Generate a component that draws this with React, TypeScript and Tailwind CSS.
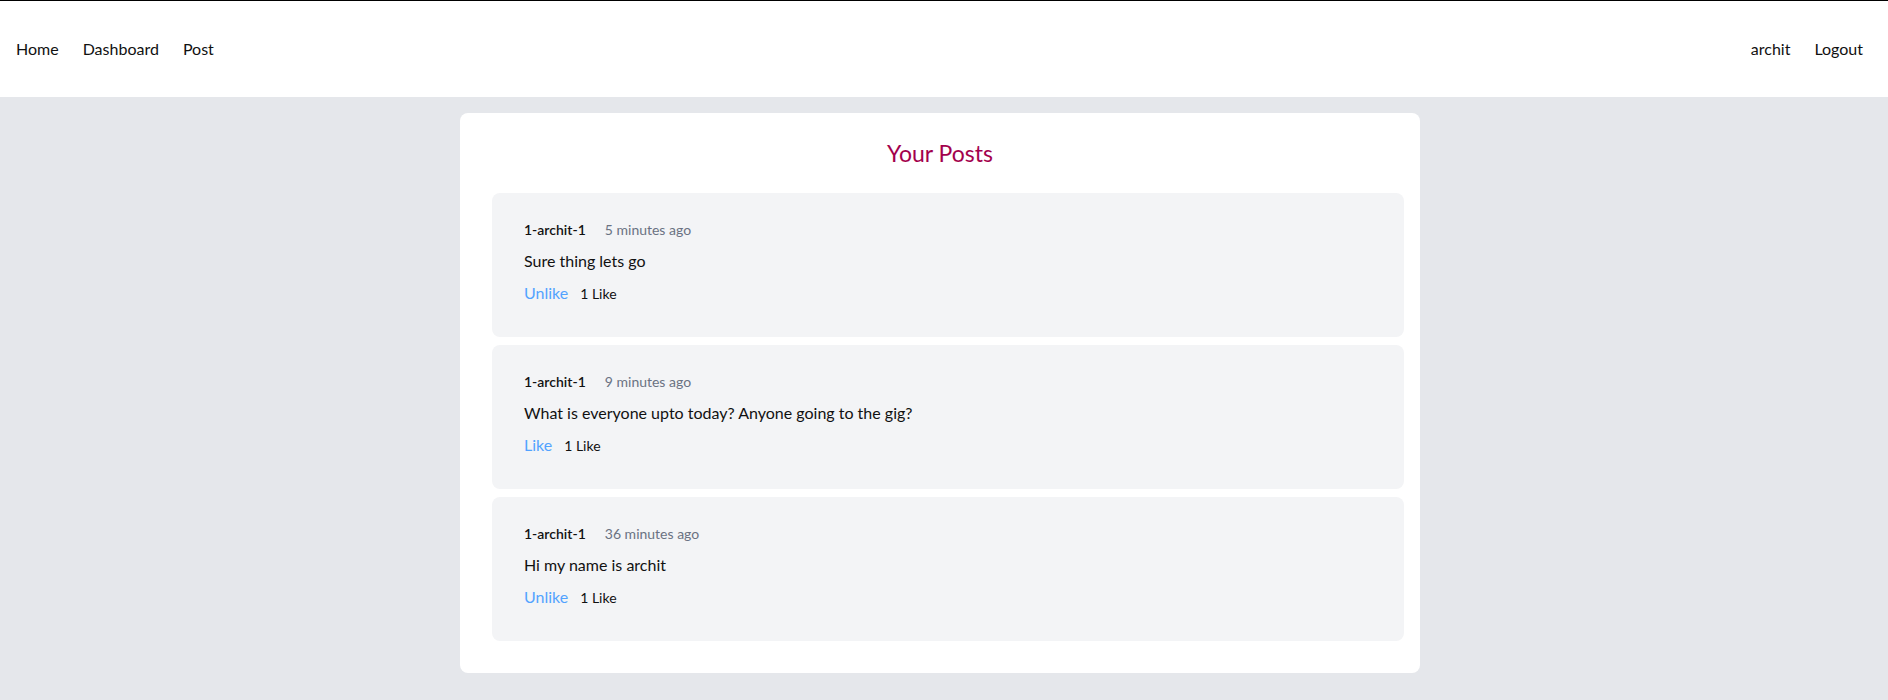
import React from "react";

const posts = [
  { user: "1-archit-1", time: "5 minutes ago", body: "Sure thing lets go", action: "Unlike", likes: "1 Like" },
  { user: "1-archit-1", time: "9 minutes ago", body: "What is everyone upto today? Anyone going to the gig?", action: "Like", likes: "1 Like" },
  { user: "1-archit-1", time: "36 minutes ago", body: "Hi my name is archit", action: "Unlike", likes: "1 Like" },
];

export default function App() {
  return (
    <div className="min-h-[700px] bg-gray-200 text-[#111] font-['Lato','Roboto',sans-serif]">
      <header className="border-t border-black bg-white h-[97px] flex items-center justify-between pl-1 pr-[13px]">
        <nav className="flex items-center text-base">
          <a className="px-3 py-2">Home</a>
          <a className="px-3 py-2">Dashboard</a>
          <a className="px-3 py-2">Post</a>
        </nav>
        <nav className="flex items-center text-base">
          <a className="px-3 py-2">archit</a>
          <a className="px-3 py-2">Logout</a>
        </nav>
      </header>
      <main className="flex justify-center pr-2 pt-4 pb-7">
        <div className="w-[960px] bg-white rounded-lg pt-6 pb-8 px-4">
          <h1 className="text-center text-[23px] leading-8 text-pink-800">Your Posts</h1>
          <div className="mt-6 ml-4 flex flex-col gap-2">
            {posts.map((p, i) => (
              <div key={i} className="h-[144px] bg-gray-100 rounded-lg pl-8 pt-[27px]">
                <div className="flex items-baseline text-sm leading-5">
                  <span className="font-semibold">{p.user}</span>
                  <span className="ml-[19px] text-gray-500">{p.time}</span>
                </div>
                <p className="mt-[9px] text-base leading-6">{p.body}</p>
                <div className="mt-2 flex items-baseline">
                  <button className="text-base leading-6 text-blue-400">{p.action}</button>
                  <span className="ml-3 text-sm leading-5">{p.likes}</span>
                </div>
              </div>
            ))}
          </div>
        </div>
      </main>
    </div>
  );
}
